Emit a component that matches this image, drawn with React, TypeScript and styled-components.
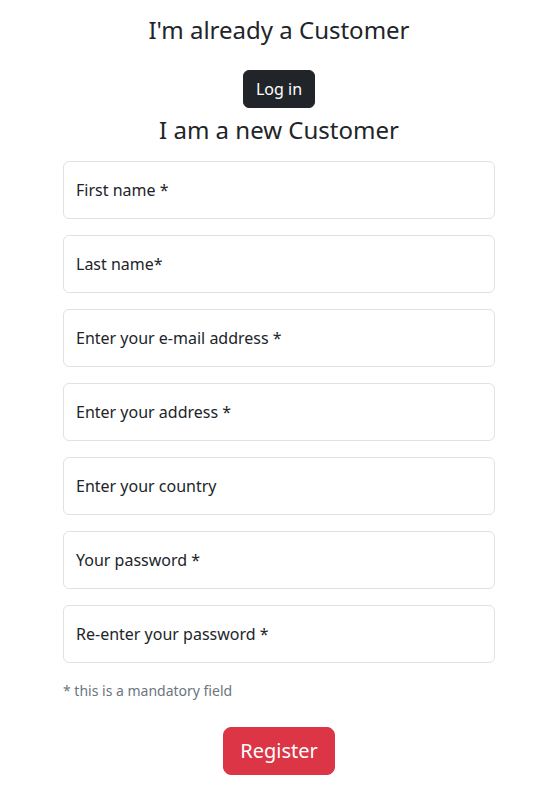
import React from 'react'
import styled, { createGlobalStyle } from 'styled-components'

const GlobalStyle = createGlobalStyle`
  html, body {
    margin: 0;
    padding: 0;
    background: #fff;
  }

  body {
    font-family: 'Noto Sans', 'Liberation Sans', sans-serif;
    font-size: 16px;
    line-height: 1.5;
    color: #212529;
  }

  * {
    box-sizing: border-box;
  }
`

const Page = styled.div`
  display: flex;
  flex-direction: column;
  align-items: center;
  padding: 16px 58px 31px 63px;
`

const Heading = styled.h3<{ $gap: number }>`
  margin: 0 0 ${(p) => p.$gap}px;
  font-size: 24px;
  font-weight: 400;
  line-height: 1.2;
  text-align: center;
`

const Button = styled.button<{ $variant: 'dark' | 'danger'; $large?: boolean }>`
  font-family: inherit;
  border: 1px solid ${(p) => (p.$variant === 'dark' ? '#212529' : '#dc3545')};
  background: ${(p) => (p.$variant === 'dark' ? '#212529' : '#dc3545')};
  color: #fff;
  font-size: ${(p) => (p.$large ? '20px' : '16px')};
  line-height: 1.5;
  padding: ${(p) => (p.$large ? '8px 16px' : '6px 12px')};
  border-radius: ${(p) => (p.$large ? '8px' : '6px')};
  cursor: pointer;
`

const LoginButton = styled(Button)`
  margin: 17px 0 8px;
`

const Form = styled.form`
  width: 100%;
  display: flex;
  flex-direction: column;
  gap: 16px;
  margin-top: 16px;
`

const Field = styled.label`
  display: flex;
  align-items: center;
  height: 58px;
  padding: 0 12px;
  border: 1px solid #dee2e6;
  border-radius: 6px;
  background: #fff;
  font-size: 16px;
  color: #212529;
`

const Note = styled.div`
  align-self: flex-start;
  margin-top: 17px;
  font-size: 14px;
  color: #6c757d;
`

const Footer = styled.div`
  display: flex;
  justify-content: center;
  margin-top: 26px;
`

const fields = [
  'First name *',
  'Last name*',
  'Enter your e-mail address *',
  'Enter your address *',
  'Enter your country',
  'Your password *',
  'Re-enter your password *'
]

const App = () => {
  return (
    <>
      <GlobalStyle />
      <Page>
        <Heading $gap={8}>I'm already a Customer</Heading>
        <LoginButton $variant="dark">Log in</LoginButton>
        <Heading $gap={0}>I am a new Customer</Heading>
        <Form onSubmit={(e) => e.preventDefault()}>
          {fields.map((f) => (
            <Field key={f}>{f}</Field>
          ))}
        </Form>
        <Note>* this is a mandatory field</Note>
        <Footer>
          <Button $variant="danger" $large>
            Register
          </Button>
        </Footer>
      </Page>
    </>
  )
}

export default App
